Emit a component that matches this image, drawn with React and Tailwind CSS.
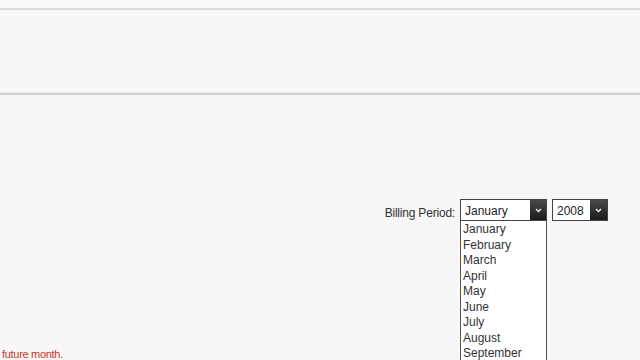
import React from 'react';

const months = [
  'January', 'February', 'March', 'April', 'May', 'June',
  'July', 'August', 'September', 'October', 'November', 'December',
];

function Arrow({ className }) {
  return (
    <div className={`flex items-center justify-center bg-gradient-to-b from-[#4a4a4a] to-[#1c1c1c] ${className}`}>
      <svg width="7" height="5" viewBox="0 0 7 5">
        <path d="M1 1 L3.5 3.5 L6 1" stroke="#f0f0f0" strokeWidth="1.4" fill="none" />
      </svg>
    </div>
  );
}

export default function App() {
  return (
    <div className="w-[640px] h-[360px] overflow-hidden bg-[#f7f7f7] text-[#333] font-['Liberation_Sans',Arial,sans-serif] relative">
      {/* HEADER STRIPS */}
      <div className="h-[8px] bg-[#f9f9f9]" />
      <div className="h-[2px] bg-[#dcdcdc]" />
      <div className="h-[82px] bg-[#f8f8f8]" />
      <div className="h-[1px] bg-[#e6e6e6]" />
      <div className="h-[2px] bg-[#cfcfcf]" />

      {/* BILLING PERIOD */}
      <div className="flex justify-end items-center pr-[32px] mt-[104px] h-[22px]">
        <span className="text-[12px] mr-[5px] mt-[6px] tracking-[-0.2px]">Billing Period:</span>

        <div className="relative">
          <div className="flex w-[87px] h-[22px] border border-[#444] bg-white">
            <span className="flex-1 text-[12px] pl-[4px] pt-[1px] leading-[20px] text-[#222]">January</span>
            <Arrow className="w-[16px]" />
          </div>

          {/* OPEN LIST */}
          <div className="absolute left-0 top-[22px] w-[87px] h-[200px] pt-[1px] border border-t-0 border-[#555] bg-white z-10">
            {months.map(m => (
              <div key={m} className="text-[12px] leading-[15.5px] pl-[2px] text-[#333]">
                {m}
              </div>
            ))}
          </div>
        </div>

        <div className="flex w-[56px] h-[22px] ml-[5px] border border-[#444] bg-white">
          <span className="flex-1 text-[12px] pl-[4px] pt-[1px] leading-[20px] text-[#222]">2008</span>
          <Arrow className="w-[17px]" />
        </div>
      </div>

      {/* NOTE */}
      <p className="mt-[127px] pl-[2px] text-[11px] leading-[13px] text-[#c0392b] tracking-[-0.3px]">
        future month.
      </p>
    </div>
  );
}
